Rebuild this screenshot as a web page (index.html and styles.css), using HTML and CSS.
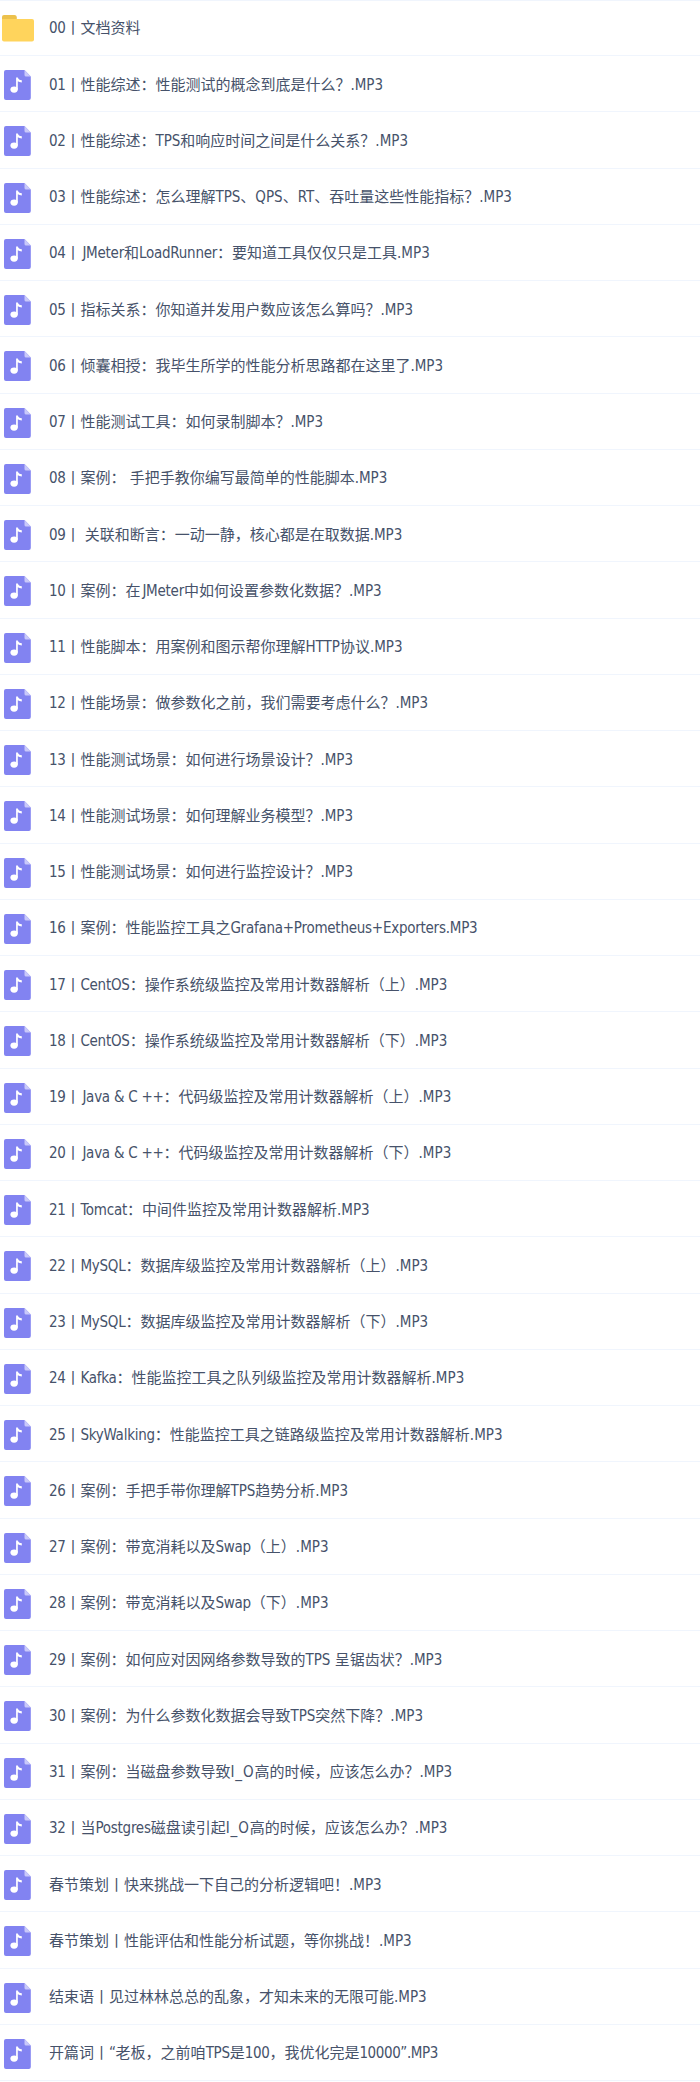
FILE: index.html
```html
<!DOCTYPE html>
<html lang="zh-CN">
<head>
  <meta charset="UTF-8">
  <title>文件列表</title>
  <link rel="stylesheet" href="styles.css">
</head>
<body>

  <svg class="symbols" width="0" height="0">
    <symbol id="folder" viewBox="0 0 32 27">
      <path d="M0 2Q0 0 2 0H12.5Q14.5 0 14.8 2V8H0Z" fill="#ecc14c"/>
      <path d="M0 4H30Q32 4 32 6V24.5Q32 26.5 30 26.5H2Q0 26.5 0 24.5Z" fill="#ffd45c"/>
    </symbol>
    <symbol id="music" viewBox="0 0 27 30">
      <path d="M2 0H20.5L26.8 6.5V28Q26.8 30 24.8 30H2Q0 30 0 28V2Q0 0 2 0Z" fill="#8283f1"/>
      <path d="M20.5 0L26.8 6.5H22Q20.5 6.5 20.5 5Z" fill="#c9c9fa"/>
      <ellipse cx="10.1" cy="19.6" rx="3.7" ry="3.1" fill="#fff"/>
      <path d="M12.1 7.6H13.8Q14.4 10 17.8 10.3V12.4Q15.2 12.3 13.8 11.2V19.6H12.1Z" fill="#fff"/>
    </symbol>
  </svg>

  <ul class="file-list">
    <li><svg class="icon folder"><use href="#folder"/></svg><p><span class="num">00</span>丨文档资料</p></li>
    <li><svg class="icon"><use href="#music"/></svg><p><span class="num">01</span>丨性能综述：性能测试的概念到底是什么？<span class="caps">.MP3</span></p></li>
    <li><svg class="icon"><use href="#music"/></svg><p><span class="num">02</span>丨性能综述：<span class="caps">TPS</span>和响应时间之间是什么关系？<span class="caps">.MP3</span></p></li>
    <li><svg class="icon"><use href="#music"/></svg><p><span class="num">03</span>丨性能综述：怎么理解<span class="caps">TPS</span>、<span class="caps">QPS</span>、<span class="caps">RT</span>、吞吐量这些性能指标？<span class="caps">.MP3</span></p></li>
    <li><svg class="icon"><use href="#music"/></svg><p><span class="num">04</span>丨<span class="jay">JMeter</span>和<span>LoadRunner</span>：要知道工具仅仅只是工具<span class="caps">.MP3</span></p></li>
    <li><svg class="icon"><use href="#music"/></svg><p><span class="num">05</span>丨指标关系：你知道并发用户数应该怎么算吗？<span class="caps">.MP3</span></p></li>
    <li><svg class="icon"><use href="#music"/></svg><p><span class="num">06</span>丨倾囊相授：我毕生所学的性能分析思路都在这里了<span class="caps">.MP3</span></p></li>
    <li><svg class="icon"><use href="#music"/></svg><p><span class="num">07</span>丨性能测试工具：如何录制脚本？<span class="caps">.MP3</span></p></li>
    <li><svg class="icon"><use href="#music"/></svg><p><span class="num">08</span>丨案例： 手把手教你编写最简单的性能脚本<span class="caps">.MP3</span></p></li>
    <li><svg class="icon"><use href="#music"/></svg><p><span class="num">09</span>丨 关联和断言：一动一静，核心都是在取数据<span class="caps">.MP3</span></p></li>
    <li><svg class="icon"><use href="#music"/></svg><p><span class="num">10</span>丨案例：在<span class="jay">JMeter</span>中如何设置参数化数据？<span class="caps">.MP3</span></p></li>
    <li><svg class="icon"><use href="#music"/></svg><p><span class="num">11</span>丨性能脚本：用案例和图示帮你理解<span class="caps">HTTP</span>协议<span class="caps">.MP3</span></p></li>
    <li><svg class="icon"><use href="#music"/></svg><p><span class="num">12</span>丨性能场景：做参数化之前，我们需要考虑什么？<span class="caps">.MP3</span></p></li>
    <li><svg class="icon"><use href="#music"/></svg><p><span class="num">13</span>丨性能测试场景：如何进行场景设计？<span class="caps">.MP3</span></p></li>
    <li><svg class="icon"><use href="#music"/></svg><p><span class="num">14</span>丨性能测试场景：如何理解业务模型？<span class="caps">.MP3</span></p></li>
    <li><svg class="icon"><use href="#music"/></svg><p><span class="num">15</span>丨性能测试场景：如何进行监控设计？<span class="caps">.MP3</span></p></li>
    <li><svg class="icon"><use href="#music"/></svg><p><span class="num">16</span>丨案例：性能监控工具之<span>Grafana+Prometheus+Exporters.MP3</span></p></li>
    <li><svg class="icon"><use href="#music"/></svg><p><span class="num">17</span>丨<span>CentOS</span>：操作系统级监控及常用计数器解析（上）<span class="caps">.MP3</span></p></li>
    <li><svg class="icon"><use href="#music"/></svg><p><span class="num">18</span>丨<span>CentOS</span>：操作系统级监控及常用计数器解析（下）<span class="caps">.MP3</span></p></li>
    <li><svg class="icon"><use href="#music"/></svg><p><span class="num">19</span>丨<span class="jay">Java &amp; C ++</span>：代码级监控及常用计数器解析（上）<span class="caps">.MP3</span></p></li>
    <li><svg class="icon"><use href="#music"/></svg><p><span class="num">20</span>丨<span class="jay">Java &amp; C ++</span>：代码级监控及常用计数器解析（下）<span class="caps">.MP3</span></p></li>
    <li><svg class="icon"><use href="#music"/></svg><p><span class="num">21</span>丨<span>Tomcat</span>：中间件监控及常用计数器解析<span class="caps">.MP3</span></p></li>
    <li><svg class="icon"><use href="#music"/></svg><p><span class="num">22</span>丨<span>MySQL</span>：数据库级监控及常用计数器解析（上）<span class="caps">.MP3</span></p></li>
    <li><svg class="icon"><use href="#music"/></svg><p><span class="num">23</span>丨<span>MySQL</span>：数据库级监控及常用计数器解析（下）<span class="caps">.MP3</span></p></li>
    <li><svg class="icon"><use href="#music"/></svg><p><span class="num">24</span>丨<span>Kafka</span>：性能监控工具之队列级监控及常用计数器解析<span class="caps">.MP3</span></p></li>
    <li><svg class="icon"><use href="#music"/></svg><p><span class="num">25</span>丨<span>SkyWalking</span>：性能监控工具之链路级监控及常用计数器解析<span class="caps">.MP3</span></p></li>
    <li><svg class="icon"><use href="#music"/></svg><p><span class="num">26</span>丨案例：手把手带你理解<span class="caps">TPS</span>趋势分析<span class="caps">.MP3</span></p></li>
    <li><svg class="icon"><use href="#music"/></svg><p><span class="num">27</span>丨案例：带宽消耗以及<span>Swap</span>（上）<span class="caps">.MP3</span></p></li>
    <li><svg class="icon"><use href="#music"/></svg><p><span class="num">28</span>丨案例：带宽消耗以及<span>Swap</span>（下）<span class="caps">.MP3</span></p></li>
    <li><svg class="icon"><use href="#music"/></svg><p><span class="num">29</span>丨案例：如何应对因网络参数导致的<span class="caps">TPS</span> 呈锯齿状？<span class="caps">.MP3</span></p></li>
    <li><svg class="icon"><use href="#music"/></svg><p><span class="num">30</span>丨案例：为什么参数化数据会导致<span class="caps">TPS</span>突然下降？<span class="caps">.MP3</span></p></li>
    <li><svg class="icon"><use href="#music"/></svg><p><span class="num">31</span>丨案例：当磁盘参数导致<span class="wide">I_O</span>高的时候，应该怎么办？<span class="caps">.MP3</span></p></li>
    <li><svg class="icon"><use href="#music"/></svg><p><span class="num">32</span>丨当<span>Postgres</span>磁盘读引起<span class="wide">I_O</span>高的时候，应该怎么办？<span class="caps">.MP3</span></p></li>
    <li><svg class="icon"><use href="#music"/></svg><p>春节策划丨快来挑战一下自己的分析逻辑吧！<span class="caps">.MP3</span></p></li>
    <li><svg class="icon"><use href="#music"/></svg><p>春节策划丨性能评估和性能分析试题，等你挑战！<span class="caps">.MP3</span></p></li>
    <li><svg class="icon"><use href="#music"/></svg><p>结束语丨见过林林总总的乱象，才知未来的无限可能<span class="caps">.MP3</span></p></li>
    <li><svg class="icon"><use href="#music"/></svg><p>开篇词丨<span class="num">“</span>老板，之前咱<span>TPS</span>是<span class="num">100</span>，我优化完是<span class="num">10000”.MP3</span></p></li>
  </ul>

</body>
</html>
```
FILE: styles.css
```css
body {
  margin: 0;
  background: #fff;
  color: #46526a;
  font-family: "DejaVu Sans Condensed", "Noto Sans CJK SC", sans-serif;
  font-size: 15px;
}
.symbols {
  display: block;
}
.file-list {
  list-style: none;
  margin: 0;
  padding: 0;
  border-top: 1px solid #f0f5fd;
}
.file-list li {
  display: flex;
  align-items: flex-start;
  box-sizing: border-box;
  height: 56.25px;
  padding-left: 4px;
  border-bottom: 1px solid #f0f5fd;
}
.file-list li:first-child {
  height: 55.2px;
  padding-left: 2px;
}
.icon {
  flex: none;
  width: 27px;
  height: 30px;
  margin: 14px 18px 0 0;
}
.icon.folder {
  width: 32px;
  height: 27px;
  margin-right: 15px;
}
.file-list p {
  margin: 16.4px 0 0;
  line-height: 24px;
  white-space: nowrap;
}
.file-list li:first-child p {
  margin-top: 15px;
}
/* spacing of the latin runs inside the chinese text */
.file-list span {
  letter-spacing: -0.25px;
}
.file-list .num {
  letter-spacing: -0.4px;
}
.file-list .caps {
  letter-spacing: 0;
}
.file-list .wide {
  letter-spacing: 0.9px;
}
.file-list .jay {
  padding-left: 2px;
}
```
